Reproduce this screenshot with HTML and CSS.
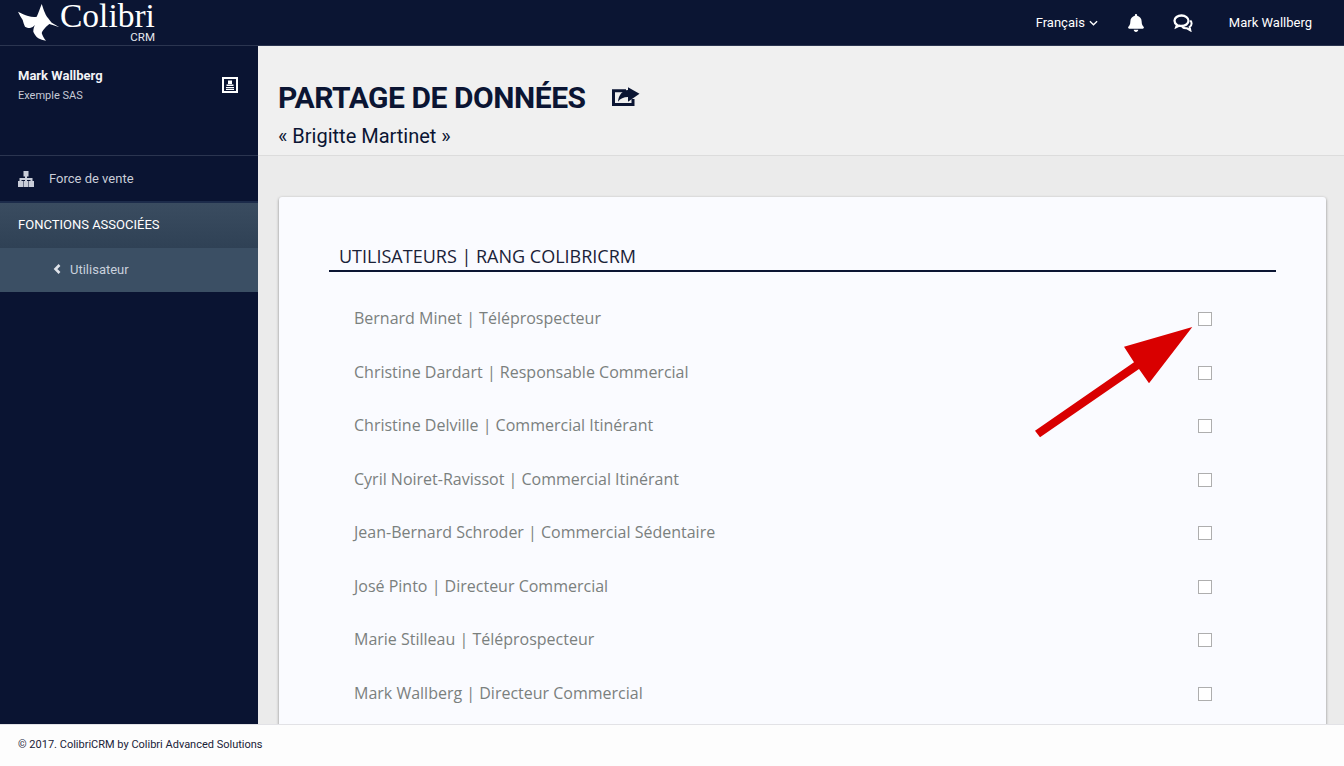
FILE: index.html
```
<!DOCTYPE html>
<html lang="fr">
<head>
<meta charset="utf-8">
<title>Partage de données</title>
<link rel="stylesheet" href="styles.css">
</head>
<body>
<div class="page">
  <header class="topbar">
    <a class="logo">
      <svg class="bird" viewBox="18 0 42 44"><path d="M18 11.700C21.500 13.500 25 15 28 16C31 16.800 34 17.500 36.700 16.700C38.500 13 40 8 41.700 4C42.800 7 43.800 10.500 45 13C45.800 15 46.800 16.800 48 18C49.300 19.800 50.500 21.500 51.700 22.700C54.300 24.300 57 25.800 59.300 27.300C56 26.200 52.500 25 49.300 24C47 25.800 45 27.800 43.300 30C42.500 31 42 32 41.700 33C42.500 35.800 44 38.500 46 40.700C43 40.300 40.500 39.500 38.300 38.300C36 36.500 34.300 34.300 33.300 31.700C33.300 29.500 33.800 27 35 25C33.500 26.500 32 27.500 30 28C28 28 26.300 27.500 25 26.700C24 24.500 23.300 22.300 22.700 20C21 17.300 19.300 14.500 18 11.700Z"/></svg>
      <span class="logo-text"><span class="logo-name">Colibri</span><span class="logo-sub">CRM</span></span>
    </a>
    <nav class="topnav">
      <span class="lang">Français
        <svg class="caret" viewBox="0 0 10 6"><path d="M1 1l4 4 4-4"/></svg>
      </span>
      <svg class="bell" viewBox="0 0 448 512"><path d="M224 512c35.320 0 63.970-28.650 63.970-64H160.030c0 35.350 28.650 64 63.970 64zm215.390-149.710c-19.320-20.760-55.470-51.990-55.470-154.290 0-77.700-54.480-139.900-127.940-155.160V32c0-17.670-14.320-32-31.980-32s-31.980 14.330-31.980 32v20.840C118.560 68.100 64.080 130.300 64.080 208c0 102.300-36.150 133.530-55.470 154.290-6 6.450-8.660 14.160-8.610 21.710.11 16.400 12.980 32 32.100 32h383.800c19.120 0 32-15.600 32.100-32 .05-7.550-2.610-15.270-8.610-21.710z"/></svg>
      <svg class="chat" viewBox="0 0 20 18"><path class="chat-a" d="M8.500 1.500C4.600 1.500 1.500 3.800 1.500 6.800c0 1.700 1 3.100 2.500 4.100L3.300 13l2.700-1.300c.8.200 1.600.3 2.500.3 3.900 0 7-2.300 7-5.200s-3.100-5.300-7-5.300z"/><path class="chat-b" d="M17.300 6.500c.9.900 1.300 1.900 1.300 3 0 1.400-.8 2.600-2 3.500l.7 3.300-3.300-2c-1.900.2-3.600-.3-4.800-1.300"/></svg>
      <span class="user">Mark Wallberg</span>
    </nav>
  </header>

  <div class="body">
    <aside class="sidebar">
      <div class="profile">
        <div>
          <div class="profile-name">Mark Wallberg</div>
          <div class="profile-org">Exemple SAS</div>
        </div>
        <svg class="card-icon" viewBox="0 0 16 16"><path fill-rule="evenodd" d="M0 0h16v16H0zM2 2v12h12V2z"/><rect x="6" y="3.500" width="4" height="3.500"/><path d="M4.500 7.500h7V9h-7zM4 10h8v1.200H4zM4 12h8v1H4z"/></svg>
      </div>
      <div class="nav-item">
        <svg class="tree" viewBox="0 0 16 16"><path d="M5.500 0h5v5.500H9v1.500h5.500v3H16v6h-5v-6h1.500V9H9v1h1.500v6h-5v-6H7V9H3.500v1H5v6H0v-6h1.500V7H7V5.500H5.500z"/></svg>
        <span>Force de vente</span>
      </div>
      <div class="nav-head">FONCTIONS ASSOCIÉES</div>
      <div class="nav-sub">
        <svg class="chev" viewBox="0 0 8 10"><path d="M6 1L2 5l4 4"/></svg>
        <span>Utilisateur</span>
      </div>
    </aside>

    <main class="main">
      <section class="title-block">
        <h1 class="title">PARTAGE DE DONNÉES
          <svg class="share" viewBox="0 0 28 20"><path class="share-box" d="M14 3.800H1.500V17.500H21V12"/><path class="share-arrow" d="M16 .300L27.500 6.800 16 14.700V10C11.500 10 8.500 11.500 6 14.700 6.800 8 10 3.500 16 3z"/></svg>
        </h1>
        <p class="subtitle">« Brigitte Martinet »</p>
      </section>
      <section class="content">
        <div class="card">
          <h2 class="card-title">UTILISATEURS | RANG COLIBRICRM</h2>
          <ul class="rows">
            <li class="row"><span>Bernard Minet | Téléprospecteur</span><i class="check"></i></li>
            <li class="row"><span>Christine Dardart | Responsable Commercial</span><i class="check"></i></li>
            <li class="row"><span>Christine Delville | Commercial Itinérant</span><i class="check"></i></li>
            <li class="row"><span>Cyril Noiret-Ravissot | Commercial Itinérant</span><i class="check"></i></li>
            <li class="row"><span>Jean-Bernard Schroder | Commercial Sédentaire</span><i class="check"></i></li>
            <li class="row"><span>José Pinto | Directeur Commercial</span><i class="check"></i></li>
            <li class="row"><span>Marie Stilleau | Téléprospecteur</span><i class="check"></i></li>
            <li class="row"><span>Mark Wallberg | Directeur Commercial</span><i class="check"></i></li>
          </ul>
        </div>
      </section>
    </main>
  </div>

  <footer class="footer">© 2017. ColibriCRM by Colibri Advanced Solutions</footer>

  <svg class="arrow" viewBox="0 0 1344 766"><polygon points="1192.300,327 1149,383.300 1139,369 1040,437.300 1035,430.700 1134,362.300 1124,346.700"/></svg>
</div>
</body>
</html>
```
FILE: styles.css
```
* { box-sizing: border-box; }
html, body { margin: 0; padding: 0; height: 100%; overflow: hidden; }
body { font-family: Roboto, "Liberation Sans", sans-serif; color: #0b1533; }

.page { position: relative; width: 1344px; height: 766px; display: flex; flex-direction: column; overflow: hidden; background: #ececec; }

.topbar { flex: 0 0 46px; height: 46px; display: flex; align-items: center; justify-content: space-between; background: #0b1533; border-bottom: 1px solid #2b3550; padding: 0 32px 0 18px; color: #fff; }
.logo { display: flex; align-items: flex-start; height: 45px; }
.bird { width: 42px; height: 44px; fill: #fff; }
.logo-text { display: flex; flex-direction: column; align-items: flex-end; }
.logo-name { font-family: "Liberation Serif", serif; font-size: 33.500px; line-height: 32px; color: #fff; }
.logo-sub { font-size: 11.500px; line-height: 10px; color: #e6e8ee; }

.topnav { display: flex; align-items: center; font-size: 13px; }
.lang { display: flex; align-items: center; gap: 4px; }
.caret { width: 9px; height: 6px; fill: none; stroke: #fff; stroke-width: 1.500; }
.bell { width: 16px; height: 18px; fill: #fff; margin-left: 30px; }
.chat { width: 20px; height: 18px; margin-left: 29px; fill: none; stroke: #fff; }
.chat-a { stroke-width: 2.300; }
.chat-b { stroke-width: 2; }
.user { margin-left: 36px; }

.body { flex: 1 1 auto; min-height: 0; display: flex; }

.sidebar { flex: 0 0 258px; background: #0a1432; color: #c9cdd8; font-size: 13px; }
.profile { height: 110px; display: flex; justify-content: space-between; align-items: flex-start; padding: 22px 20px 0 18px; border-bottom: 1px solid #2b3550; }
.profile-name { font-size: 13px; font-weight: 700; line-height: 15px; color: #f2f3f6; }
.profile-org { font-size: 11px; line-height: 14px; margin-top: 6px; color: #c6cad6; }
.card-icon { width: 16px; height: 16px; fill: #fff; margin-top: 9px; }

.nav-item { height: 47px; display: flex; align-items: center; padding-left: 18px; border-bottom: 2px solid #1c2b4a; gap: 15px; }
.tree { width: 16px; height: 16px; fill: #c9cdd8; }
.nav-head { height: 45px; display: flex; align-items: center; padding: 0 0 2px 18px; font-size: 13px; color: #fff; background: linear-gradient(#3a4c60, #2f4155); }
.nav-sub { height: 44px; display: flex; align-items: center; padding: 0 0 2px 53px; gap: 8px; background: #3b4f64; color: #c9d1dd; font-size: 13px; }
.chev { width: 9px; height: 10px; fill: none; stroke: #dfe3ea; stroke-width: 2.600; }

.main { flex: 1 1 auto; min-width: 0; display: flex; flex-direction: column; }
.title-block { flex: 0 0 110px; background: #f0f0f0; border-bottom: 1px solid #dcdcdc; padding: 34px 0 0 20px; }
.title { margin: 0; display: flex; align-items: center; font-size: 30px; font-weight: 700; line-height: 36px; letter-spacing: -0.450px; color: #0b1533; }
.share { width: 28px; height: 20px; margin: 0 0 2px 26px; overflow: visible; }
.share-box { fill: none; stroke: #0b1533; stroke-width: 3; }
.share-arrow { fill: #0b1533; }
.subtitle { margin: 8px 0 0; font-size: 20px; line-height: 24px; color: #0b1533; }

.content { flex: 1 1 auto; min-height: 0; padding: 41px 18px 0 21px; background: #ebebeb; }
.card { height: 700px; background: #fafbff; border-radius: 3px; box-shadow: 0 1px 3px rgba(0,0,0,.45); padding: 47px 50px 0; }
.card-title { margin: 0; height: 28px; padding-left: 10px; border-bottom: 2px solid #0b1533; font-family: "Open Sans", sans-serif; font-size: 18px; font-weight: 400; line-height: 24px; color: #1a2238; }
.rows { list-style: none; margin: 19.500px 0 0; padding: 0 64px 0 25px; }
.row { height: 53.500px; display: flex; align-items: center; justify-content: space-between; font-family: "Open Sans", sans-serif; font-size: 16px; color: #7a807e; }
.check { display: block; width: 14px; height: 14px; margin-top: 2px; border: 1px solid #aeaeae; background: #fff; }

.footer { flex: 0 0 42px; height: 42px; display: flex; align-items: center; padding: 0 0 2px 18px; background: #fdfdfd; border-top: 1px solid #e2e2e6; font-size: 11px; color: #1a2238; }

.arrow { position: absolute; left: 0; top: 0; width: 1344px; height: 766px; fill: #d90000; pointer-events: none; }
```
